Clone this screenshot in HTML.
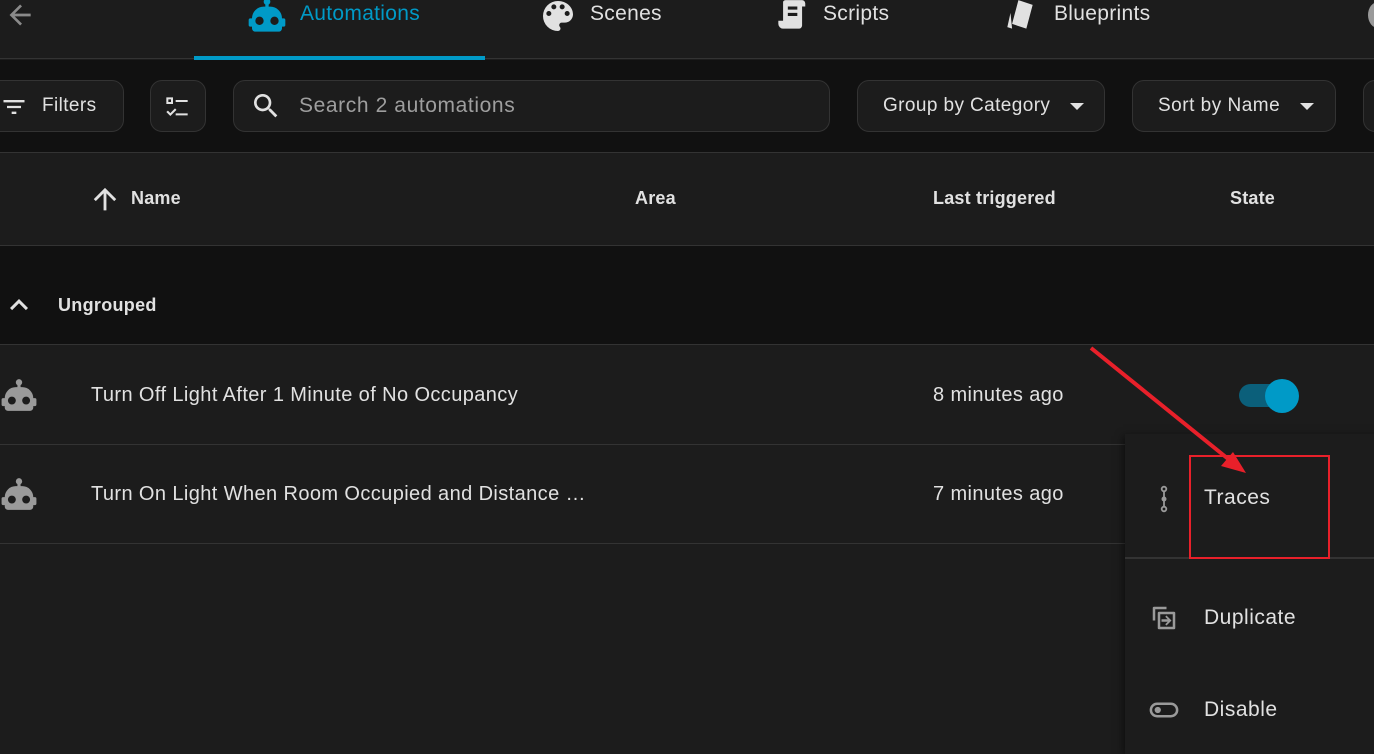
<!DOCTYPE html>
<html><head><meta charset="utf-8"><style>
*{margin:0;padding:0;box-sizing:border-box}
body{width:1374px;height:750px;overflow:hidden;background:#1c1c1c;font-family:"Liberation Sans",sans-serif;color:#e1e1e1;position:relative}
.a{position:absolute}
.t{font-size:21px;color:#e1e1e1;letter-spacing:0.3px}
.pill{position:absolute;top:80px;height:52px;border:1px solid #333;border-radius:12px;background:#1c1c1c}
.h{font-size:18px;font-weight:bold;color:#e1e1e1;position:absolute;top:188px;letter-spacing:0.2px}
.row{font-size:20px;color:#e1e1e1;position:absolute;letter-spacing:0.4px}
.m{font-size:21px;letter-spacing:0.5px}
</style></head><body>
<div class="a" style="left:0;top:0;width:1374px;height:59px;background:#1c1c1c;border-bottom:1px solid #333"></div>
<svg class="a" style="left:4px;top:-1px" width="32" height="32" viewBox="0 0 24 24"><path d="M20,11V13H8L13.5,18.5L12.08,19.92L4.16,12L12.08,4.08L13.5,5.5L8,11H20Z" fill="#8a8a8a"/></svg>
<div class="a" style="left:194px;top:56px;width:291px;height:4px;background:#009ac7"></div>
<svg class="a" style="left:247px;top:-2px" width="40" height="34" viewBox="0 2 24 20"><path d="M12,2A2,2 0 0,1 14,4C14,4.74 13.6,5.39 13,5.73V7H14A7,7 0 0,1 21,14H22A1,1 0 0,1 23,15V18A1,1 0 0,1 22,19H21V20A2,2 0 0,1 19,22H5A2,2 0 0,1 3,20V19H2A1,1 0 0,1 1,18V15A1,1 0 0,1 2,14H3A7,7 0 0,1 10,7H11V5.73C10.4,5.39 10,4.74 10,4A2,2 0 0,1 12,2M7.5,13A2.5,2.5 0 0,0 5,15.5A2.5,2.5 0 0,0 7.5,18A2.5,2.5 0 0,0 10,15.5A2.5,2.5 0 0,0 7.5,13M16.5,13A2.5,2.5 0 0,0 14,15.5A2.5,2.5 0 0,0 16.5,18A2.5,2.5 0 0,0 19,15.5A2.5,2.5 0 0,0 16.5,13Z" fill="#009ac7"/></svg>
<div class="a t" style="left:300px;top:2px;color:#009ac7">Automations</div>
<svg class="a" style="left:538px;top:-4px" width="40" height="40" viewBox="0 0 24 24"><path d="M17.5,12A1.5,1.5 0 0,1 16,10.5A1.5,1.5 0 0,1 17.5,9A1.5,1.5 0 0,1 19,10.5A1.5,1.5 0 0,1 17.5,12M14.5,8A1.5,1.5 0 0,1 13,6.5A1.5,1.5 0 0,1 14.5,5A1.5,1.5 0 0,1 16,6.5A1.5,1.5 0 0,1 14.5,8M9.5,8A1.5,1.5 0 0,1 8,6.5A1.5,1.5 0 0,1 9.5,5A1.5,1.5 0 0,1 11,6.5A1.5,1.5 0 0,1 9.5,8M6.5,12A1.5,1.5 0 0,1 5,10.5A1.5,1.5 0 0,1 6.5,9A1.5,1.5 0 0,1 8,10.5A1.5,1.5 0 0,1 6.5,12M12,3A9,9 0 0,0 3,12A9,9 0 0,0 12,21A1.5,1.5 0 0,0 13.5,19.5C13.5,19.11 13.350,18.76 13.11,18.5C12.88,18.23 12.73,17.88 12.73,17.5A1.5,1.5 0 0,1 14.23,16H16A5,5 0 0,0 21,11C21,6.58 16.97,3 12,3Z" fill="#e1e1e1"/></svg>
<div class="a t" style="left:590px;top:2px">Scenes</div>
<svg class="a" style="left:771px;top:-3px" width="40" height="38" viewBox="0 0 24 24"><path d="M7 3v12H4v2a3 3 0 0 0 3 3h10a2 2 0 0 0 2-2V6h2V4a2 2 0 0 0-2-2H9a2 2 0 0 0-2 1zm3 3h6v2h-6zm0 4h6v2h-6z" fill="#e1e1e1"/></svg>
<div class="a t" style="left:823px;top:2px">Scripts</div>
<svg class="a" style="left:1000px;top:-3px" width="40" height="38" viewBox="0 0 24 24"><path d="M11 2l9 3-4 15-9-3z M6 10l-2 9 3 1z" fill="#e1e1e1"/></svg>
<div class="a t" style="left:1054px;top:2px">Blueprints</div>
<div class="a" style="left:1368px;top:2px;width:20px;height:26px;border-radius:50%;background:#9a9a9a"></div>
<div class="a" style="left:0;top:60px;width:1374px;height:93px;background:#111;border-bottom:1px solid #333"></div>
<div class="pill" style="left:-20px;width:144px"></div>
<svg class="a" style="left:0px;top:93px" width="28" height="28" viewBox="0 0 24 24"><path d="M3 6h18v2H3zm3 5h12v2H6zm4 5h4v2h-4z" fill="#e1e1e1"/></svg>
<div class="a" style="left:42px;top:95px;font-size:19px;letter-spacing:0.4px">Filters</div>
<div class="pill" style="left:150px;width:56px"></div>
<svg class="a" style="left:161px;top:92px" width="32" height="32" viewBox="0 0 24 24"><path d="M4 4h5v5H4zm1.5 1.5v2h2v-2zM11 6h9v1.5h-9zM4 15l1.2-1 1.8 1.8 3.5-3.5 1.1 1.1L7 18zm7 1h9v1.5h-9z" fill="#e1e1e1"/></svg>
<div class="pill" style="left:233px;width:597px"></div>
<svg class="a" style="left:250px;top:90px" width="32" height="32" viewBox="0 0 24 24"><path d="M9.5,3A6.5,6.5 0 0,1 16,9.5C16,11.11 15.41,12.59 14.44,13.73L14.71,14H15.5L20.5,19L19,20.5L14,15.5V14.71L13.730,14.44C12.59,15.41 11.11,16 9.5,16A6.5,6.5 0 0,1 3,9.5A6.5,6.5 0 0,1 9.5,3M9.5,5C7,5 5,7 5,9.5C5,12 7,14 9.5,14C12,14 14,12 14,9.5C14,7 12,5 9.5,5Z" fill="#e1e1e1"/></svg>
<div class="a" style="left:299px;top:94px;font-size:21px;letter-spacing:0.6px;color:#9e9e9e">Search 2 automations</div>
<div class="pill" style="left:857px;width:248px"></div>
<div class="a" style="left:883px;top:95px;font-size:19px;letter-spacing:0.4px">Group by Category</div>
<div class="a" style="left:1070px;top:103px;border-left:7px solid transparent;border-right:7px solid transparent;border-top:7px solid #e1e1e1"></div>
<div class="pill" style="left:1132px;width:204px"></div>
<div class="a" style="left:1158px;top:95px;font-size:19px;letter-spacing:0.5px">Sort by Name</div>
<div class="a" style="left:1300px;top:103px;border-left:7px solid transparent;border-right:7px solid transparent;border-top:7px solid #e1e1e1"></div>
<div class="pill" style="left:1363px;width:60px"></div>
<div class="a" style="left:0;top:245px;width:1374px;height:1px;background:#333"></div>
<svg class="a" style="left:88px;top:182px" width="34" height="34" viewBox="0 0 24 24"><path d="M13,20H11V8L5.5,13.5L4.08,12.08L12,4.16L19.92,12.08L18.5,13.5L13,8V20Z" fill="#e1e1e1"/></svg>
<div class="h" style="left:131px">Name</div>
<div class="h" style="left:635px">Area</div>
<div class="h" style="left:933px">Last triggered</div>
<div class="h" style="left:1230px">State</div>
<div class="a" style="left:0;top:246px;width:1374px;height:99px;background:#111;border-bottom:1px solid #333"></div>
<svg class="a" style="left:1px;top:287px" width="36" height="36" viewBox="0 0 24 24"><path d="M7.41,15.41L12,10.83L16.59,15.41L18,14L12,8L6,14L7.41,15.41Z" fill="#e1e1e1"/></svg>
<div class="a" style="left:58px;top:295px;font-size:18px;font-weight:bold;letter-spacing:0.3px">Ungrouped</div>
<div class="a" style="left:0;top:444px;width:1125px;height:1px;background:#333"></div>
<div class="a" style="left:0;top:543px;width:1125px;height:1px;background:#333"></div>
<svg class="a" style="left:0;top:378px" width="38" height="34" viewBox="0 2 24 20"><path d="M12,2A2,2 0 0,1 14,4C14,4.74 13.6,5.39 13,5.73V7H14A7,7 0 0,1 21,14H22A1,1 0 0,1 23,15V18A1,1 0 0,1 22,19H21V20A2,2 0 0,1 19,22H5A2,2 0 0,1 3,20V19H2A1,1 0 0,1 1,18V15A1,1 0 0,1 2,14H3A7,7 0 0,1 10,7H11V5.73C10.4,5.39 10,4.74 10,4A2,2 0 0,1 12,2M7.5,13A2.5,2.5 0 0,0 5,15.5A2.5,2.5 0 0,0 7.5,18A2.5,2.5 0 0,0 10,15.5A2.5,2.5 0 0,0 7.5,13M16.5,13A2.5,2.5 0 0,0 14,15.5A2.5,2.5 0 0,0 16.5,18A2.5,2.5 0 0,0 19,15.5A2.5,2.5 0 0,0 16.5,13Z" fill="#9a9a9a"/></svg>
<svg class="a" style="left:0;top:477px" width="38" height="34" viewBox="0 2 24 20"><path d="M12,2A2,2 0 0,1 14,4C14,4.74 13.6,5.39 13,5.73V7H14A7,7 0 0,1 21,14H22A1,1 0 0,1 23,15V18A1,1 0 0,1 22,19H21V20A2,2 0 0,1 19,22H5A2,2 0 0,1 3,20V19H2A1,1 0 0,1 1,18V15A1,1 0 0,1 2,14H3A7,7 0 0,1 10,7H11V5.73C10.4,5.39 10,4.74 10,4A2,2 0 0,1 12,2M7.5,13A2.5,2.5 0 0,0 5,15.5A2.5,2.5 0 0,0 7.5,18A2.5,2.5 0 0,0 10,15.5A2.5,2.5 0 0,0 7.5,13M16.5,13A2.5,2.5 0 0,0 14,15.5A2.5,2.5 0 0,0 16.5,18A2.5,2.5 0 0,0 19,15.5A2.5,2.5 0 0,0 16.5,13Z" fill="#9a9a9a"/></svg>
<div class="row" style="left:91px;top:384px">Turn Off Light After 1 Minute of No Occupancy</div>
<div class="row" style="left:933px;top:384px">8 minutes ago</div>
<div class="row" style="left:91px;top:483px">Turn On Light When Room Occupied and Distance …</div>
<div class="row" style="left:933px;top:483px">7 minutes ago</div>
<div class="a" style="left:1239px;top:384px;width:52px;height:23px;border-radius:12px;background:#0b5f7a"></div>
<div class="a" style="left:1265px;top:379px;width:34px;height:34px;border-radius:50%;background:#009ac7"></div>
<div class="a" style="left:1125px;top:434px;width:260px;height:320px;background:#1c1c1c;box-shadow:-2px 2px 8px rgba(0,0,0,.5)"></div>
<div class="a" style="left:1125px;top:557px;width:249px;height:2px;background:#333"></div>
<svg class="a" style="left:1152px;top:485px" width="24" height="28" viewBox="0 0 24 28"><circle cx="12" cy="4" r="2.3" fill="none" stroke="#9a9a9a" stroke-width="1.8"/><circle cx="12" cy="14" r="2.5" fill="#9a9a9a"/><circle cx="12" cy="24" r="2.3" fill="none" stroke="#9a9a9a" stroke-width="1.8"/><path d="M12 6v16" stroke="#9a9a9a" stroke-width="1.8"/></svg>
<div class="a m" style="left:1204px;top:486px">Traces</div>
<svg class="a" style="left:1149px;top:603px" width="30" height="30" viewBox="0 0 24 24"><path d="M4 3h10v2H5v9H3V4a1 1 0 0 1 1-1zm4 4h12a1 1 0 0 1 1 1v12a1 1 0 0 1-1 1H8a1 1 0 0 1-1-1V8a1 1 0 0 1 1-1zm1 2v10h10V9zm1 4h5l-2-2 1-1 4 4-4 4-1-1 2-2h-5z" fill="#9a9a9a"/></svg>
<div class="a m" style="left:1204px;top:606px">Duplicate</div>
<svg class="a" style="left:1149px;top:695px" width="30" height="30" viewBox="0 0 24 24"><rect x="1.5" y="7" width="21" height="10" rx="5" fill="none" stroke="#9a9a9a" stroke-width="2"/><circle cx="7" cy="12" r="2.5" fill="#9a9a9a"/></svg>
<div class="a m" style="left:1204px;top:698px">Disable</div>
<div class="a" style="left:1189px;top:455px;width:141px;height:104px;border:2px solid #e8202a"></div>
<svg class="a" style="left:0;top:0" width="1374" height="750"><line x1="1091" y1="348" x2="1232" y2="462" stroke="#e8202a" stroke-width="4"/><polygon points="1246,473 1221,466 1233,452" fill="#e8202a"/></svg>
</body></html>
